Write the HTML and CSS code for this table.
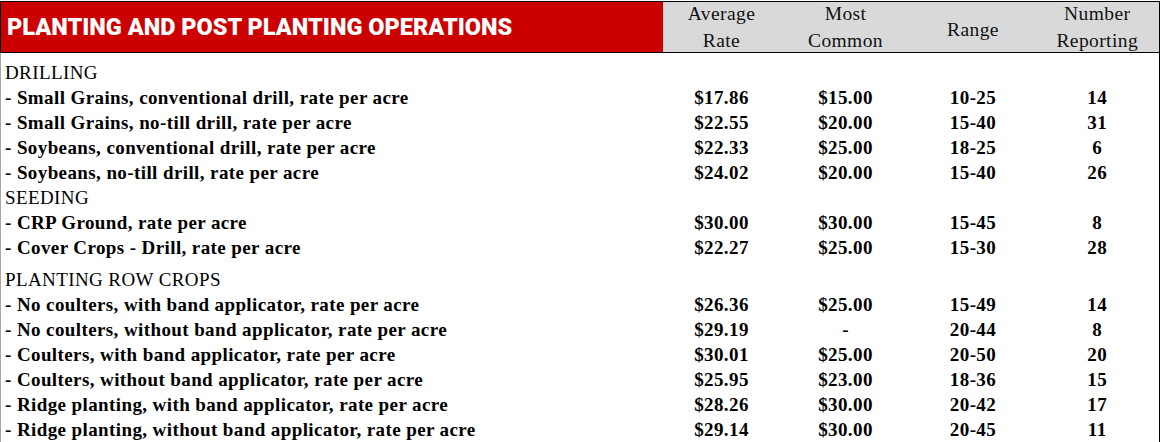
FILE: index.html
```html
<!DOCTYPE html>
<html>
<head>
<meta charset="utf-8">
<link rel="stylesheet" href="styles.css">
</head>
<body>
<table class="rates">
  <colgroup>
    <col class="c-desc">
    <col class="c-avg">
    <col class="c-common">
    <col class="c-range">
    <col class="c-count">
  </colgroup>
  <thead>
    <tr class="head-row">
      <th class="title">PLANTING AND POST PLANTING OPERATIONS</th>
      <th class="label"><div class="label-box">Average<br>Rate</div></th>
      <th class="label"><div class="label-box">Most<br>Common</div></th>
      <th class="label"><div class="label-box single">Range</div></th>
      <th class="label"><div class="label-box">Number<br>Reporting</div></th>
    </tr>
  </thead>
  <tbody>
    <tr class="cat first"><td>DRILLING</td><td></td><td></td><td></td><td></td></tr>
    <tr><td>- Small Grains, conventional drill, rate per acre</td><td>$17.86</td><td>$15.00</td><td>10-25</td><td>14</td></tr>
    <tr><td>- Small Grains, no-till drill, rate per acre</td><td>$22.55</td><td>$20.00</td><td>15-40</td><td>31</td></tr>
    <tr><td>- Soybeans, conventional drill, rate per acre</td><td>$22.33</td><td>$25.00</td><td>18-25</td><td>6</td></tr>
    <tr><td>- Soybeans, no-till drill, rate per acre</td><td>$24.02</td><td>$20.00</td><td>15-40</td><td>26</td></tr>
    <tr class="cat"><td>SEEDING</td><td></td><td></td><td></td><td></td></tr>
    <tr><td>- CRP Ground, rate per acre</td><td>$30.00</td><td>$30.00</td><td>15-45</td><td>8</td></tr>
    <tr><td>- Cover Crops - Drill, rate per acre</td><td>$22.27</td><td>$25.00</td><td>15-30</td><td>28</td></tr>
    <tr class="cat tall"><td>PLANTING ROW CROPS</td><td></td><td></td><td></td><td></td></tr>
    <tr><td>- No coulters, with band applicator, rate per acre</td><td>$26.36</td><td>$25.00</td><td>15-49</td><td>14</td></tr>
    <tr><td>- No coulters, without band applicator, rate per acre</td><td>$29.19</td><td>-</td><td>20-44</td><td>8</td></tr>
    <tr><td>- Coulters, with band applicator, rate per acre</td><td>$30.01</td><td>$25.00</td><td>20-50</td><td>20</td></tr>
    <tr><td>- Coulters, without band applicator, rate per acre</td><td>$25.95</td><td>$23.00</td><td>18-36</td><td>15</td></tr>
    <tr><td>- Ridge planting, with band applicator, rate per acre</td><td>$28.26</td><td>$30.00</td><td>20-42</td><td>17</td></tr>
    <tr><td>- Ridge planting, without band applicator, rate per acre</td><td>$29.14</td><td>$30.00</td><td>20-45</td><td>11</td></tr>
  </tbody>
</table>
</body>
</html>
```
FILE: styles.css
```css
html, body {
  margin: 0;
  padding: 0;
  background: #ffffff;
}

body {
  padding-top: 1px;
  font-family: "Liberation Serif", "Times New Roman", serif;
  color: #000000;
}

.rates {
  border-collapse: collapse;
  table-layout: fixed;
  width: 1160px;
  border-left: 1px solid #a6a6a6;
  border-right: 1px solid #000000;
}

.c-desc { width: 662px; }
.c-avg { width: 118px; }
.c-common { width: 130px; }
.c-range { width: 125px; }
.c-count { width: 124px; }

.head-row th {
  height: 50px;
  padding: 0;
  border-top: 1px solid #000000;
  border-bottom: 1px solid #000000;
}

.head-row .title {
  background: #cc0000;
  color: #ffffff;
  text-align: left;
  padding-left: 6px;
  font-family: Roboto, "Liberation Sans", sans-serif;
  font-weight: 900;
  font-size: 23.5px;
  border-left: 1px solid #000000;
  vertical-align: middle;
}

.head-row .label {
  background: #d9d9d9;
  font-weight: normal;
  font-size: 19.5px;
  letter-spacing: 0.4px;
  text-align: center;
  vertical-align: top;
  color: #111111;
}

.label-box {
  box-sizing: border-box;
  height: 50px;
  line-height: 27px;
  display: flex;
  flex-direction: column;
  justify-content: center;
  align-items: center;
}

.label-box.single {
  padding-top: 4px;
}

tbody td {
  height: 25px;
  padding: 0;
  font-size: 19px;
  letter-spacing: 0.4px;
  font-weight: bold;
  text-align: center;
  vertical-align: middle;
  white-space: nowrap;
}

tbody td:first-child {
  text-align: left;
  padding-left: 4px;
}

tbody .cat td {
  font-weight: normal;
}

tbody .first td {
  height: 31px;
  vertical-align: bottom;
  padding-bottom: 1px;
}

tbody .tall td {
  height: 31px;
  vertical-align: bottom;
  padding-bottom: 1px;
}
```
